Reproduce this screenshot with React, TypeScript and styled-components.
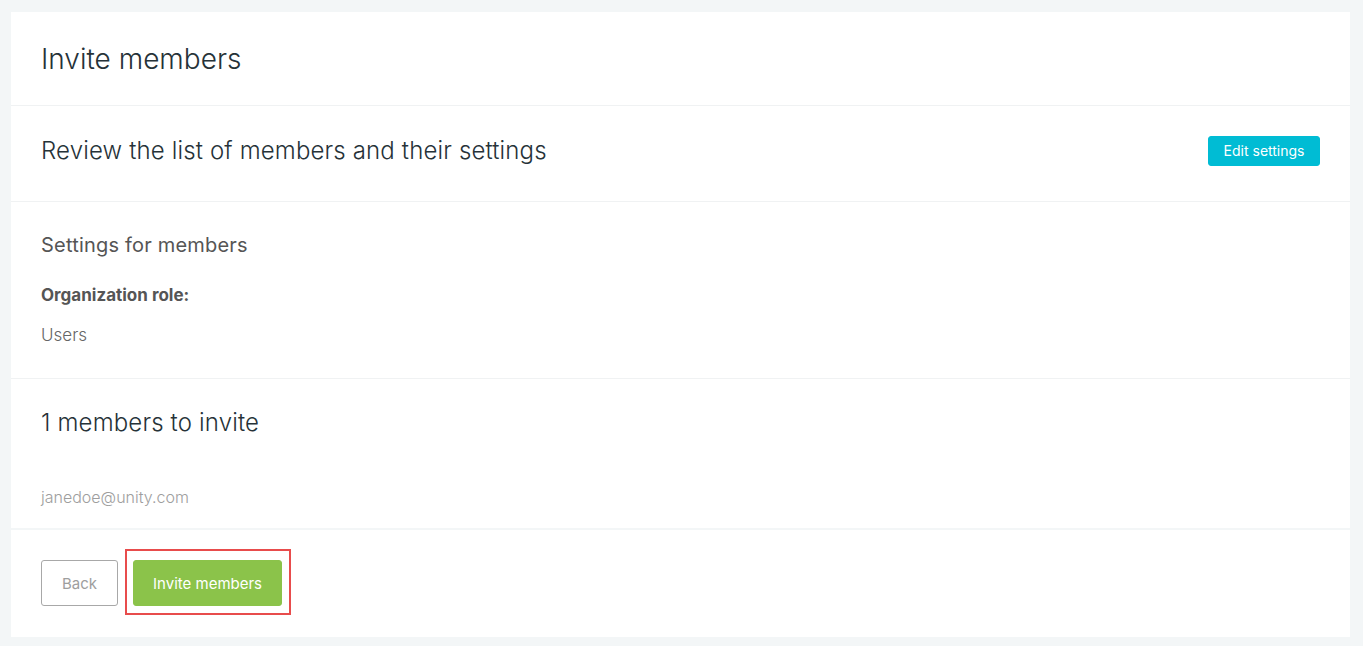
import React from "react";
import styled, { createGlobalStyle } from "styled-components";

const GlobalStyle = createGlobalStyle`
  body {
    margin: 0;
    background: #f3f6f7;
    font-family: Inter, "Open Sans", sans-serif;
  }
`;

const Page = styled.div`
  padding: 12px 13px 10px 11px;
`;

const Card = styled.div`
  background: #fff;
  display: flex;
  flex-direction: column;
`;

const Section = styled.div<{ $divider?: "thin" | "thick" }>`
  padding: 0 30px;
  border-top: ${(p) =>
    p.$divider === "thick" ? "2px solid #f3f6f7" : p.$divider === "thin" ? "1px solid #f0f2f3" : "none"};
`;

const HeaderSection = styled(Section)<{ $height: number; $shift?: number }>`
  height: ${(p) => p.$height}px;
  box-sizing: border-box;
  padding-bottom: ${(p) => p.$shift || 0}px;
  display: flex;
  align-items: center;
  justify-content: space-between;
`;

const PageTitle = styled.h1`
  margin: 0;
  font-size: 28px;
  font-weight: 300;
  color: #263238;
`;

const SubTitle = styled.h2`
  margin: 0;
  font-size: 24px;
  font-weight: 300;
  line-height: 30px;
  letter-spacing: 0.15px;
  color: #263238;
`;

const SmallTitle = styled.h3`
  margin: 0;
  font-size: 20px;
  font-weight: 400;
  line-height: 24px;
  letter-spacing: 0.2px;
  color: #555;
`;

const Label = styled.div`
  margin-top: 28px;
  font-size: 17px;
  font-weight: 700;
  line-height: 20px;
  color: #555;
`;

const Value = styled.div`
  margin-top: 20px;
  font-size: 17px;
  font-weight: 300;
  line-height: 20px;
  color: #666;
`;

const Email = styled.div`
  margin-top: 49px;
  font-size: 16px;
  font-weight: 300;
  line-height: 20px;
  color: #9e9e9e;
`;

const BlockSection = styled(Section)<{ $top: number; $bottom: number }>`
  padding-top: ${(p) => p.$top}px;
  padding-bottom: ${(p) => p.$bottom}px;
`;

const Footer = styled(Section)`
  padding-top: 30px;
  padding-bottom: 31px;
  display: flex;
  gap: 15px;
`;

const Button = styled.button<{ $variant: "info" | "ghost" | "success" }>`
  font-family: Inter, "Open Sans", sans-serif;
  border-radius: 3px;
  cursor: pointer;
  font-size: ${(p) => (p.$variant === "info" ? "14px" : "15px")};
  height: ${(p) => (p.$variant === "info" ? "30px" : "46px")};
  padding: ${(p) => (p.$variant === "info" ? "0 14.5px" : p.$variant === "ghost" ? "0 20px" : "0 19px")};
  border: 1px solid
    ${(p) => (p.$variant === "ghost" ? "#a8a8a8" : p.$variant === "info" ? "#00bcd4" : "#8bc34a")};
  background: ${(p) => (p.$variant === "ghost" ? "#fff" : p.$variant === "info" ? "#00bcd4" : "#8bc34a")};
  color: ${(p) => (p.$variant === "ghost" ? "#9e9e9e" : "#fff")};
`;

const Highlighted = styled.div`
  position: relative;
  display: flex;

  &::after {
    content: "";
    position: absolute;
    top: -11px;
    left: -8px;
    right: -9px;
    bottom: -9px;
    border: 2px solid #e84c4c;
    pointer-events: none;
  }
`;

export default function App() {
  return (
    <Page>
      <GlobalStyle />
      <Card>
        <HeaderSection $height={93}>
          <PageTitle>Invite members</PageTitle>
        </HeaderSection>
        <HeaderSection $divider="thin" $height={96} $shift={6}>
          <SubTitle>Review the list of members and their settings</SubTitle>
          <Button $variant="info">Edit settings</Button>
        </HeaderSection>
        <BlockSection $divider="thin" $top={31} $bottom={33}>
          <SmallTitle>Settings for members</SmallTitle>
          <Label>Organization role:</Label>
          <Value>Users</Value>
        </BlockSection>
        <BlockSection $divider="thin" $top={29} $bottom={21}>
          <SubTitle>1 members to invite</SubTitle>
          <Email>janedoe@unity.com</Email>
        </BlockSection>
        <Footer $divider="thick">
          <Button $variant="ghost">Back</Button>
          <Highlighted>
            <Button $variant="success">Invite members</Button>
          </Highlighted>
        </Footer>
      </Card>
    </Page>
  );
}
